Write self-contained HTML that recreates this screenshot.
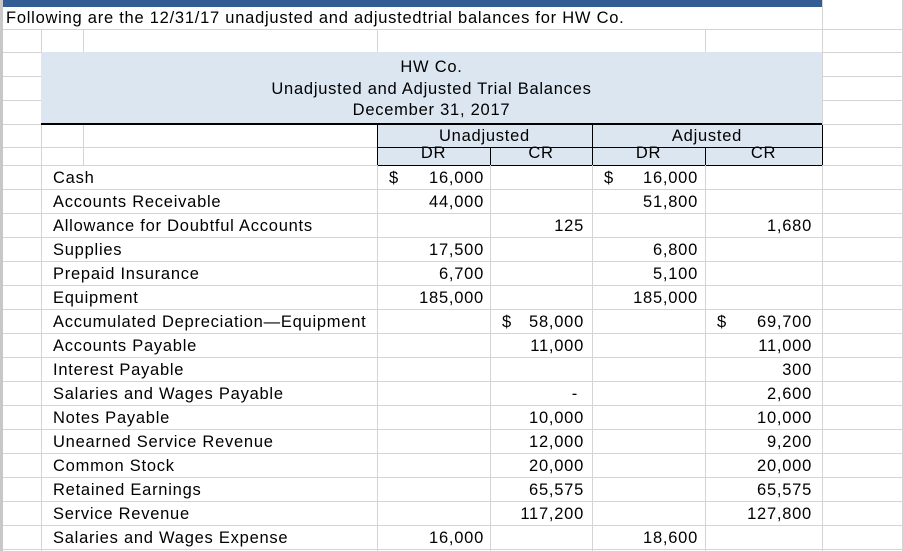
<!DOCTYPE html>
<html><head><meta charset="utf-8"><style>
*{margin:0;padding:0;box-sizing:border-box}
body{width:903px;height:551px;background:#fff;position:relative;overflow:hidden;font-family:"Liberation Sans",sans-serif;font-size:16.5px;letter-spacing:0.75px;color:#000}
.h{position:absolute;height:1px;background:#d4d4d4}
.v{position:absolute;width:1px;background:#d4d4d4}
.t{position:absolute;white-space:nowrap;line-height:24px}
.r{position:absolute;white-space:nowrap;line-height:24px;text-align:right}
.c{position:absolute;white-space:nowrap;text-align:center}
</style></head><body>
<div style="position:absolute;left:0;top:0;width:3px;height:551px;background:#c8c8c8"></div>
<div style="position:absolute;left:3px;top:0;width:819px;height:7px;background:#325d95"></div>
<div class="v" style="left:902px;top:0;height:551px"></div>
<div class="v" style="left:822px;top:0;height:551px"></div>
<div class="h" style="left:3px;top:29px;width:900px"></div>
<div class="t" style="left:6px;top:6px">Following are the 12/31/17 unadjusted and adjustedtrial balances for HW Co.</div>
<div class="v" style="left:41px;top:29px;height:522px"></div>
<div class="v" style="left:83px;top:29px;height:23px"></div>
<div class="v" style="left:377px;top:29px;height:23px"></div>
<div class="v" style="left:705px;top:29px;height:23px"></div>
<div class="h" style="left:3px;top:52px;width:900px"></div>
<div class="h" style="left:3px;top:76px;width:38px"></div>
<div class="h" style="left:3px;top:100px;width:38px"></div>
<div class="h" style="left:822px;top:76px;width:81px"></div>
<div class="h" style="left:822px;top:100px;width:81px"></div>
<div class="h" style="left:3px;top:124px;width:900px"></div>
<div class="h" style="left:3px;top:147px;width:900px"></div>
<div style="position:absolute;left:41px;top:52px;width:781px;height:72px;background:#dce6f1"></div>
<div class="c" style="left:41px;top:56px;width:781px;line-height:22px">HW Co.</div>
<div class="c" style="left:41px;top:78px;width:781px;line-height:22px">Unadjusted and Adjusted Trial Balances</div>
<div class="c" style="left:41px;top:99px;width:781px;line-height:22px">December 31, 2017</div>
<div style="position:absolute;left:41px;top:123px;width:781px;height:2px;background:#000"></div>
<div class="v" style="left:83px;top:125px;height:40px"></div>
<div style="position:absolute;left:377px;top:125px;width:446px;height:41px;background:#dce6f1;border:1px solid #000;border-top:none"></div>
<div style="position:absolute;left:377px;top:147px;width:446px;height:1px;background:#000"></div>
<div style="position:absolute;left:592px;top:125px;width:1px;height:40px;background:#000"></div>
<div style="position:absolute;left:490px;top:147px;width:1px;height:18px;background:#000"></div>
<div style="position:absolute;left:705px;top:147px;width:1px;height:18px;background:#000"></div>
<div class="c" style="left:377px;top:125px;width:215px;line-height:22px">Unadjusted</div>
<div class="c" style="left:592px;top:125px;width:230px;line-height:22px">Adjusted</div>
<div class="c" style="left:377px;top:143px;width:113px;line-height:20px">DR</div>
<div class="c" style="left:490px;top:143px;width:102px;line-height:20px">CR</div>
<div class="c" style="left:592px;top:143px;width:113px;line-height:20px">DR</div>
<div class="c" style="left:705px;top:143px;width:117px;line-height:20px">CR</div>
<div class="v" style="left:377px;top:165px;height:386px"></div>
<div class="v" style="left:490px;top:165px;height:386px"></div>
<div class="v" style="left:592px;top:165px;height:386px"></div>
<div class="v" style="left:705px;top:165px;height:386px"></div>
<div id="g"></div>
<script>
var rows=[
["Cash","$|16,000","","$|16,000",""],
["Accounts Receivable","44,000","","51,800",""],
["Allowance for Doubtful Accounts","","125","","1,680"],
["Supplies","17,500","","6,800",""],
["Prepaid Insurance","6,700","","5,100",""],
["Equipment","185,000","","185,000",""],
["Accumulated Depreciation\u2014Equipment","","$|58,000","","$|69,700"],
["Accounts Payable","","11,000","","11,000"],
["Interest Payable","","","","300"],
["Salaries and Wages Payable","","-","","2,600"],
["Notes Payable","","10,000","","10,000"],
["Unearned Service Revenue","","12,000","","9,200"],
["Common Stock","","20,000","","20,000"],
["Retained Earnings","","65,575","","65,575"],
["Service Revenue","","117,200","","127,800"],
["Salaries and Wages Expense","16,000","","18,600",""]];
var cols=[[377,483],[490,583],[592,697],[705,811]];
var h="";
h+='<div class="h" style="left:3px;top:165px;width:374px"></div><div class="h" style="left:822px;top:165px;width:81px"></div>';
for(var i=0;i<rows.length;i++){var y=165+i*24;
 h+='<div class="h" style="left:3px;top:'+(y+24)+'px;width:900px"></div>';
 h+='<div class="t" style="left:53px;top:'+(y+1)+'px">'+rows[i][0]+'</div>';
 for(var j=0;j<4;j++){var v=rows[i][j+1];if(!v)continue;
  if(v.indexOf("$|")==0){h+='<div class="t" style="left:'+(cols[j][0]+12)+'px;top:'+(y+1)+'px">$</div>';v=v.slice(2);}
  if(v=="-"){h+='<div class="r" style="left:0;width:'+(cols[j][1]-5)+'px;top:'+(y+1)+'px">-</div>';continue;}
  h+='<div class="r" style="left:0;width:'+(cols[j][1]+1)+'px;top:'+(y+1)+'px">'+v+'</div>';}
}
document.getElementById("g").innerHTML=h;
</script>
</body></html>
